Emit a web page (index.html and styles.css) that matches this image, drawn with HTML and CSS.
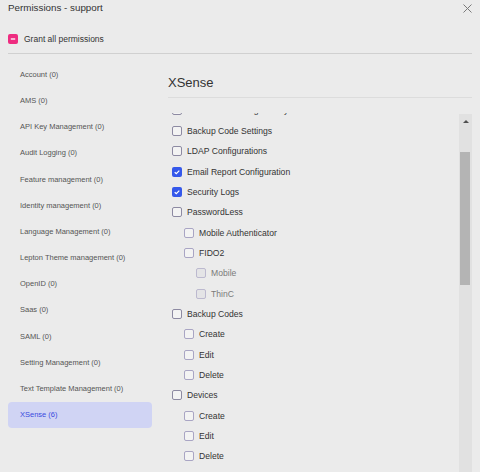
FILE: index.html
```html
<!DOCTYPE html>
<html lang="en">
<head>
<meta charset="utf-8">
<title>Permissions - support</title>
<link rel="stylesheet" href="styles.css">
</head>
<body>
<div class="modal">
  <div class="top">
    <div class="title-row">
      <span class="title">Permissions - support</span>
      <button class="close" aria-label="Close">
        <svg width="9" height="9" viewBox="0 0 9 9"><path d="M0.5 0.5 L8.5 8.5 M8.5 0.5 L0.5 8.5" stroke="#7a7a7a" stroke-width="1" fill="none"/></svg>
      </button>
    </div>
    <label class="grant">
      <span class="cb cb-pink"><svg width="10" height="10" viewBox="0 0 10 10"><path d="M2.8 5 H7.2" stroke="#fff" stroke-width="1.3"/></svg></span>
      <span>Grant all permissions</span>
    </label>
  </div>
  <div class="body">
    <nav class="nav">
      <div class="nav-item">Account (0)</div>
      <div class="nav-item">AMS (0)</div>
      <div class="nav-item">API Key Management (0)</div>
      <div class="nav-item">Audit Logging (0)</div>
      <div class="nav-item">Feature management (0)</div>
      <div class="nav-item">Identity management (0)</div>
      <div class="nav-item">Language Management (0)</div>
      <div class="nav-item">Lepton Theme management (0)</div>
      <div class="nav-item">OpenID (0)</div>
      <div class="nav-item">Saas (0)</div>
      <div class="nav-item">SAML (0)</div>
      <div class="nav-item">Setting Management (0)</div>
      <div class="nav-item">Text Template Management (0)</div>
      <div class="nav-item active">XSense (6)</div>
    </nav>
    <section class="content">
      <h2 class="heading">XSense</h2>
      <div class="scroll">
        <div class="list">
          <div class="row first"><span class="cb"></span><span>Two Factor Settings Policy</span></div>
          <div class="row"><span class="cb"></span><span>Backup Code Settings</span></div>
          <div class="row"><span class="cb"></span><span>LDAP Configurations</span></div>
          <div class="row"><span class="cb checked"><svg width="10" height="10" viewBox="0 0 10 10"><path d="M2.7 5.2 L4.3 6.7 L7.3 3.6" stroke="#fff" stroke-width="1.2" fill="none"/></svg></span><span>Email Report Configuration</span></div>
          <div class="row"><span class="cb checked"><svg width="10" height="10" viewBox="0 0 10 10"><path d="M2.7 5.2 L4.3 6.7 L7.3 3.6" stroke="#fff" stroke-width="1.2" fill="none"/></svg></span><span>Security Logs</span></div>
          <div class="row"><span class="cb"></span><span>PasswordLess</span></div>
          <div class="row l1"><span class="cb"></span><span>Mobile Authenticator</span></div>
          <div class="row l1"><span class="cb"></span><span>FIDO2</span></div>
          <div class="row l2 disabled"><span class="cb"></span><span>Mobile</span></div>
          <div class="row l2 disabled"><span class="cb"></span><span>ThinC</span></div>
          <div class="row"><span class="cb"></span><span>Backup Codes</span></div>
          <div class="row l1"><span class="cb"></span><span>Create</span></div>
          <div class="row l1"><span class="cb"></span><span>Edit</span></div>
          <div class="row l1"><span class="cb"></span><span>Delete</span></div>
          <div class="row"><span class="cb"></span><span>Devices</span></div>
          <div class="row l1"><span class="cb"></span><span>Create</span></div>
          <div class="row l1"><span class="cb"></span><span>Edit</span></div>
          <div class="row l1"><span class="cb"></span><span>Delete</span></div>
          <div class="row"><span class="cb checked"><svg width="10" height="10" viewBox="0 0 10 10"><path d="M2.7 5.2 L4.3 6.7 L7.3 3.6" stroke="#fff" stroke-width="1.2" fill="none"/></svg></span><span>Audit Logs</span></div>
          <div class="row l1"><span class="cb"></span><span>View</span></div>
        </div>
        <div class="scrollbar">
          <div class="sb-btn"><span class="sb-arrow"></span></div>
          <div class="sb-gap"></div>
          <div class="sb-thumb"></div>
        </div>
      </div>
    </section>
  </div>
</div>
</body>
</html>
```
FILE: styles.css
```css
html, body {
  margin: 0;
  height: 472px;
  overflow: hidden;
}
body {
  background: #ebebeb;
  font-family: "Liberation Sans", Arial, sans-serif;
  color: #333;
}
.modal {
  padding: 0 8px;
}
.top {
  padding-bottom: 7px;
  border-bottom: 1px solid #d0d0d0;
}
.title-row {
  display: flex;
  justify-content: space-between;
  align-items: center;
  height: 16px;
}
.title {
  font-size: 9.8px;
  line-height: 16px;
  color: #333;
}
.close {
  border: 0;
  background: none;
  padding: 0;
  display: flex;
  cursor: pointer;
}
.grant {
  margin-top: 16px;
  height: 14px;
  display: flex;
  align-items: center;
  gap: 6px;
  font-size: 8.5px;
  color: #333;
}
.cb {
  width: 10px;
  height: 10px;
  box-sizing: border-box;
  border-radius: 2px;
  flex: none;
  display: flex;
}
.cb svg {
  display: block;
}
.cb-pink {
  background: #ee2c80;
}
.body {
  display: grid;
  grid-template-columns: 144px 1fr;
  column-gap: 16px;
}
.nav {
  padding-top: 7.2px;
  display: flex;
  flex-direction: column;
}
.nav-item {
  height: 26.2px;
  padding-left: 12px;
  display: flex;
  align-items: center;
  font-size: 7.5px;
  color: #555;
  border-radius: 4px;
}
.nav-item.active {
  background: #d0d4f4;
  color: #3a4bdf;
}
.content {
  display: flex;
  flex-direction: column;
  min-width: 0;
}
.heading {
  margin: 21px 0 0;
  font-size: 13px;
  line-height: 16px;
  font-weight: normal;
  color: #333;
  padding-bottom: 6px;
  border-bottom: 1px solid #dcdcdc;
}
.scroll {
  margin-top: 15px;
  display: flex;
  height: 400px;
  overflow: hidden;
}
.list {
  flex: 1;
  overflow: hidden;
  padding-left: 4px;
}
.row {
  height: 20.35px;
  display: flex;
  align-items: center;
  gap: 5px;
  font-size: 8.6px;
  color: #333;
  white-space: nowrap;
}
.row.first {
  margin-top: -12.7px;
}
.row .cb {
  border: 1px solid #8d8aa2;
  background: #f3f3f3;
}
.row.l1 {
  padding-left: 12px;
}
.row.l1 .cb {
  border-color: #a9a5c4;
}
.row.l2 {
  padding-left: 24px;
}
.row.disabled {
  color: #7a7a7a;
}
.row.disabled .cb {
  border-color: #bcb9cf;
  background: #e4e4e6;
}
.row .cb.checked {
  border: 0;
  background: #3558ea;
}
.scrollbar {
  width: 13px;
  margin-top: 1px;
  background: #e1e1e1;
  display: flex;
  flex-direction: column;
  flex: none;
}
.sb-btn {
  height: 14px;
  display: flex;
  align-items: center;
  justify-content: center;
}
.sb-arrow {
  width: 0;
  height: 0;
  border-left: 3px solid transparent;
  border-right: 3px solid transparent;
  border-bottom: 3px solid #505050;
}
.sb-gap {
  height: 24px;
}
.sb-thumb {
  height: 133px;
  margin: 0 2px 0 1px;
  background: #b4b4b4;
}
```
